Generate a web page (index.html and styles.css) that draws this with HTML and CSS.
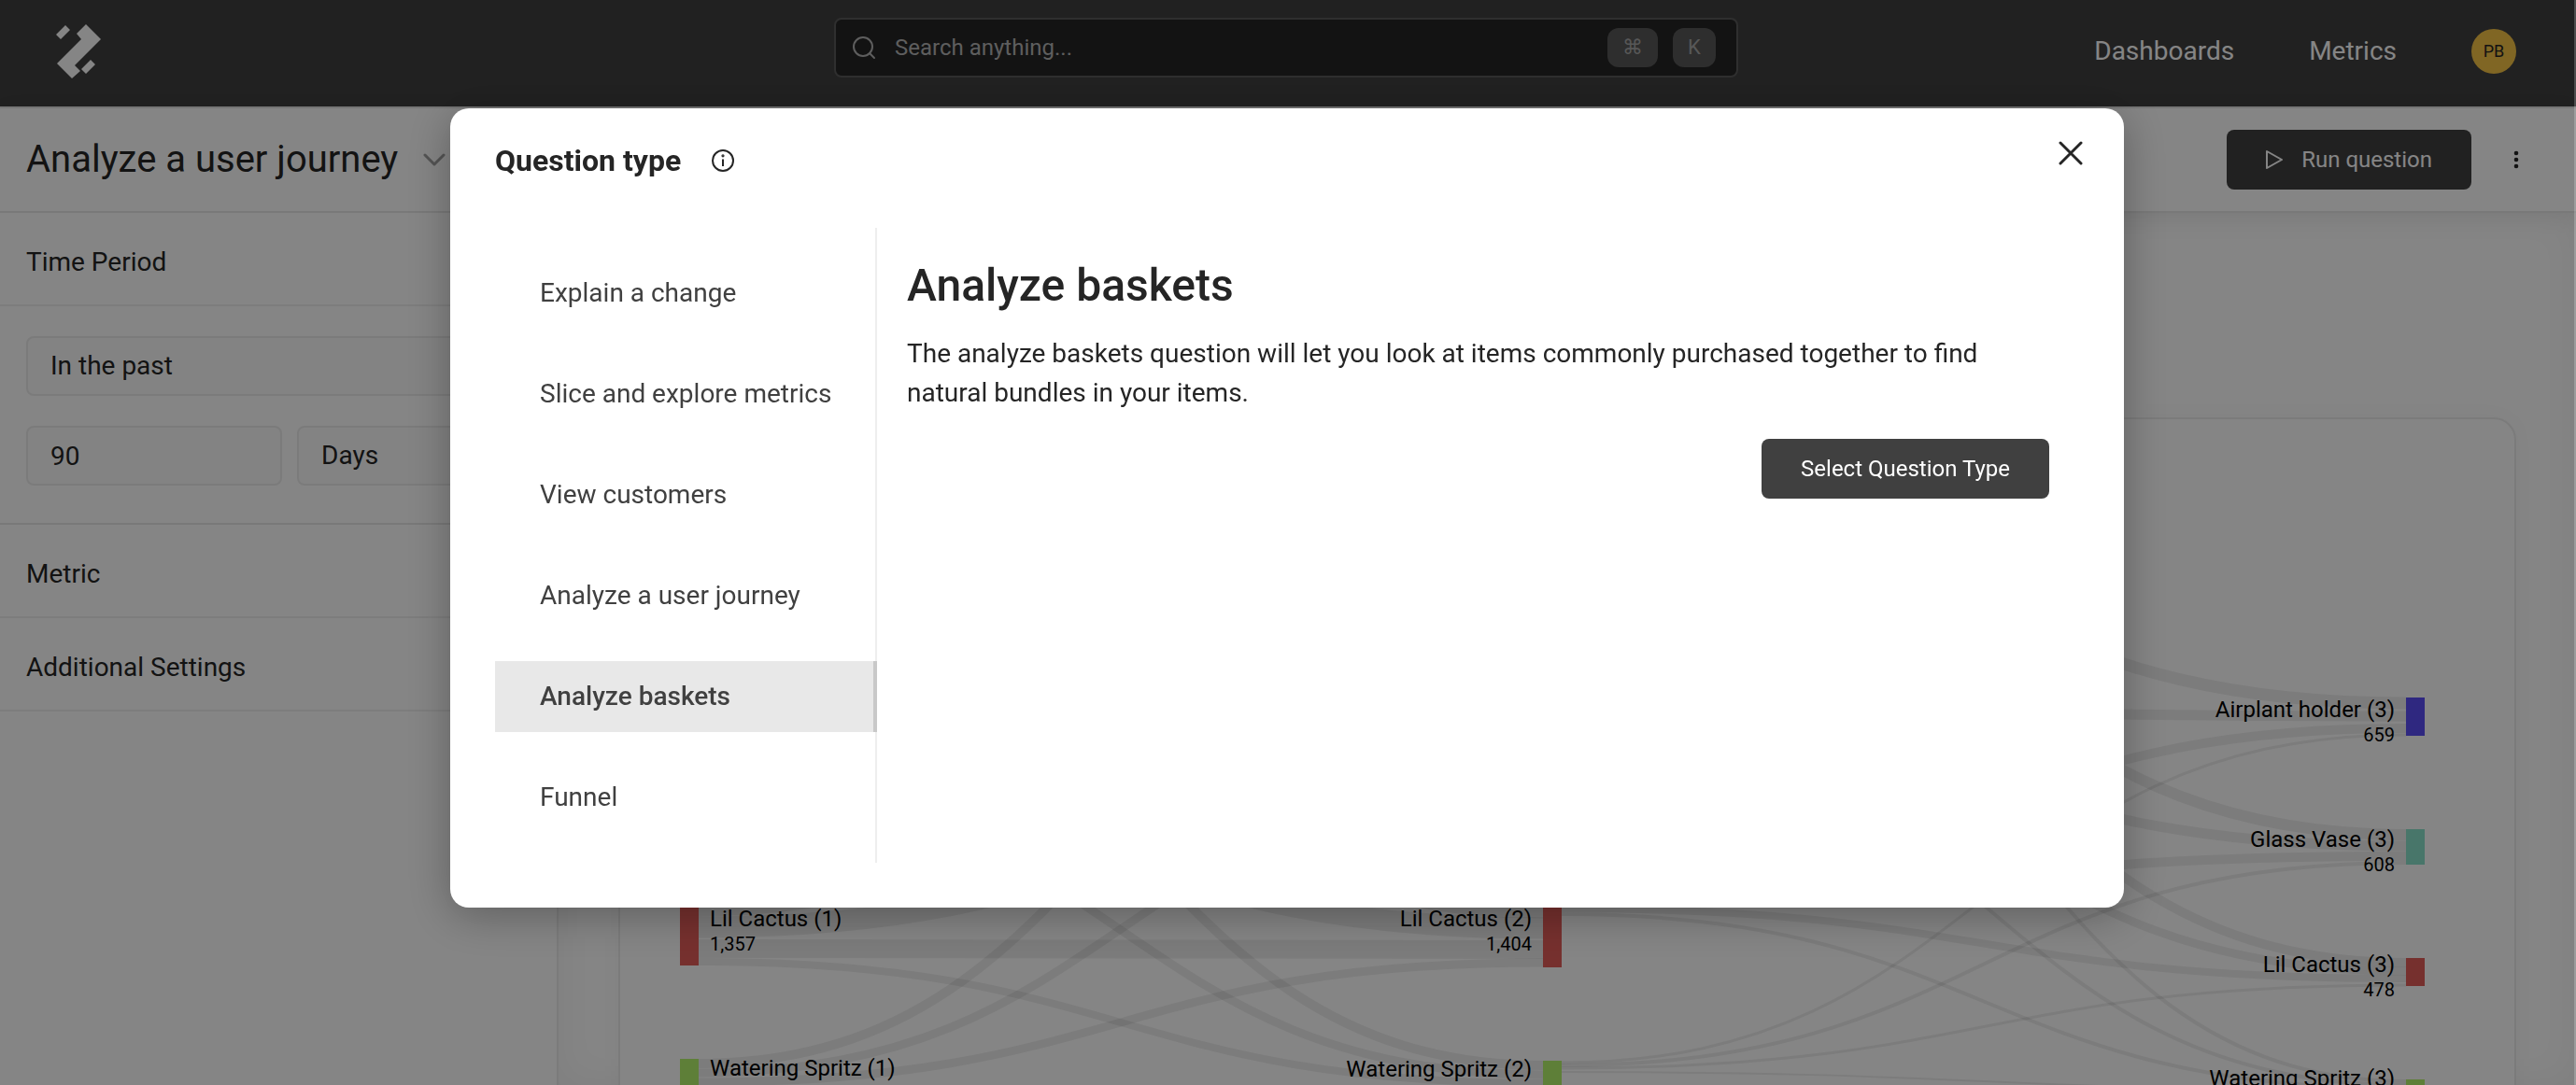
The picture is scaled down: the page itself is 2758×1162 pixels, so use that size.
FILE: index.html
```html
<!DOCTYPE html>
<html lang="en">
<head>
<meta charset="utf-8">
<title>Analyze a user journey</title>
<link rel="stylesheet" href="styles.css">
</head>
<body>
<div class="app">
  <header class="topbar">
    <a class="logo" href="#" aria-label="Home">
      <svg width="48" height="60" viewBox="0 0 48 60" fill="currentColor"><path d="M10 1 15 6 5 16 0 11ZM32 0 48 16 20 44 26 50 17 58 1 42 27 16 22 10ZM37 38 42 43 32 53 27 48Z"/></svg>
    </a>
    <form class="search" role="search">
      <svg class="search-icon" width="26" height="26" viewBox="0 0 26 26" fill="none" stroke="currentColor" stroke-width="2" stroke-linecap="round"><circle cx="12" cy="12" r="10"/><path d="m19 19 5 5"/></svg>
      <input class="search-input" type="text" aria-label="Search" placeholder="Search anything...">
      <kbd class="key key-wide">⌘</kbd>
      <kbd class="key">K</kbd>
    </form>
    <nav class="topnav">
      <a href="#">Dashboards</a>
      <a href="#">Metrics</a>
      <button class="avatar" type="button">PB</button>
    </nav>
  </header>

  <div class="subbar">
    <h1 class="page-title">Analyze a user journey</h1>
    <svg class="chevron" width="24" height="14" viewBox="0 0 24 14" fill="none" stroke="currentColor" stroke-width="3" stroke-linecap="round" stroke-linejoin="round"><path d="M2 2 12 12 22 2"/></svg>
    <button class="btn btn-run" type="button">
      <svg width="18" height="22" viewBox="0 0 18 22" fill="none" stroke="currentColor" stroke-width="2" stroke-linejoin="round"><path d="M1 2 17 11 1 20Z"/></svg>
      Run question
    </button>
    <button class="more" type="button" aria-label="More options">
      <svg width="6" height="20" viewBox="0 0 6 20" fill="currentColor"><circle cx="3" cy="3" r="2.3"/><circle cx="3" cy="10" r="2.3"/><circle cx="3" cy="17" r="2.3"/></svg>
    </button>
  </div>

  <div class="workspace">
    <aside class="settings">
      <h2 class="section-title">Time Period</h2>
      <div class="section-body">
        <select class="field field-wide" aria-label="Range type"><option>In the past</option></select>
        <input class="field" type="text" aria-label="Amount" value="90">
        <select class="field" aria-label="Unit"><option>Days</option></select>
      </div>
      <h2 class="section-title">Metric</h2>
      <h2 class="section-title">Additional Settings</h2>
    </aside>
    <main class="results">
      <section class="card">
        <svg class="sankey" viewBox="664 449 2028 760">
          <g class="links">
            <path stroke-width="23" d="M748 970C1200 970 1200 636 1652 636"/>
            <path stroke-width="23" d="M748 993C1200 993 1200 845 1652 845"/>
            <path stroke-width="20" d="M748 1016C1200 1016 1200 1017 1652 1017"/>
            <path stroke-width="8" d="M748 1030C1200 1030 1200 1160 1652 1160"/>
            <path stroke-width="23" d="M748 636C1200 636 1200 972 1652 972"/>
            <path stroke-width="23" d="M748 845C1200 845 1200 994 1652 994"/>
            <path stroke-width="9" d="M748 1159C1200 1159 1200 1031 1652 1031"/>
            <path stroke-width="10" d="M748 1139C1200 1139 1200 634 1652 634"/>
            <path stroke-width="9" d="M748 1149C1200 1149 1200 841 1652 841"/>
            <path stroke-width="10" d="M748 640C1200 640 1200 1141 1652 1141"/>
            <path stroke-width="9" d="M748 841C1200 841 1200 1151 1652 1151"/>
            <path stroke-width="13" d="M1672 548C2124 548 2124 753 2576 753"/>
            <path stroke-width="11" d="M1672 758C2124 758 2124 767 2576 767"/>
            <path stroke-width="10" d="M1672 947C2124 947 2124 780 2576 780"/>
            <path stroke-width="3" d="M1672 1138C2124 1138 2124 787 2576 787"/>
            <path stroke-width="12" d="M1672 560C2124 560 2124 894 2576 894"/>
            <path stroke-width="11" d="M1672 768C2124 768 2124 906 2576 906"/>
            <path stroke-width="10" d="M1672 960C2124 960 2124 917 2576 917"/>
            <path stroke-width="4" d="M1672 1141C2124 1141 2124 924 2576 924"/>
            <path stroke-width="10" d="M1672 583C2124 583 2124 1031 2576 1031"/>
            <path stroke-width="9" d="M1672 762C2124 762 2124 1040 2576 1040"/>
            <path stroke-width="8" d="M1672 973C2124 973 2124 1048 2576 1048"/>
            <path stroke-width="3" d="M1672 1144C2124 1144 2124 1055 2576 1055"/>
            <path stroke-width="4" d="M1672 560C2124 560 2124 1158 2576 1158"/>
            <path stroke-width="4" d="M1672 777C2124 777 2124 1162 2576 1162"/>
            <path stroke-width="4" d="M1672 979C2124 979 2124 1166 2576 1166"/>
            <path stroke-width="2" d="M1672 1148C2124 1148 2124 1168 2576 1168"/>
          </g>
          <g class="red"><rect x="728" y="960" width="20" height="74"/><rect x="1652" y="960" width="20" height="76"/><rect x="2576" y="1026" width="20" height="30"/></g>
          <g class="green"><rect x="728" y="1134" width="20" height="40"/><rect x="1652" y="1136" width="20" height="40"/><rect x="2576" y="1156" width="20" height="14"/></g>
          <rect class="blue" x="2576" y="747" width="20" height="41"/>
          <rect class="teal" x="2576" y="888" width="20" height="38"/>
          <g class="node-name">
            <text x="760" y="992">Lil Cactus (1)</text>
            <text x="760" y="1152">Watering Spritz (1)</text>
            <g text-anchor="end">
              <text x="1640" y="992">Lil Cactus (2)</text>
              <text x="1640" y="1153">Watering Spritz (2)</text>
              <text x="2564" y="768">Airplant holder (3)</text>
              <text x="2564" y="907">Glass Vase (3)</text>
              <text x="2564" y="1041">Lil Cactus (3)</text>
              <text x="2564" y="1163">Watering Spritz (3)</text>
            </g>
          </g>
          <g class="node-value">
            <text x="760" y="1018">1,357</text>
            <g text-anchor="end">
              <text x="1640" y="1018">1,404</text>
              <text x="2564" y="794">659</text>
              <text x="2564" y="933">608</text>
              <text x="2564" y="1067">478</text>
            </g>
          </g>
        </svg>
      </section>
    </main>
  </div>
</div>

<div class="overlay">
  <div class="modal" role="dialog" aria-modal="true" aria-labelledby="modal-title">
    <div class="modal-head">
      <h2 class="modal-title" id="modal-title">Question type</h2>
      <svg class="info" width="26" height="26" viewBox="0 0 26 26" fill="none" stroke="currentColor" stroke-width="2"><circle cx="13" cy="13" r="11"/><path d="M13 11.500V19"/><circle cx="13" cy="7.800" r=".6"/></svg>
      <button class="close" type="button" aria-label="Close">
        <svg width="26" height="26" viewBox="0 0 26 26" fill="none" stroke="currentColor" stroke-width="3" stroke-linecap="round"><path d="M2 2 24 24M24 2 2 24"/></svg>
      </button>
    </div>
    <div class="modal-body">
      <nav class="types">
        <a href="#">Explain a change</a>
        <a href="#">Slice and explore metrics</a>
        <a href="#">View customers</a>
        <a href="#">Analyze a user journey</a>
        <a class="selected" href="#" aria-current="true">Analyze baskets</a>
        <a href="#">Funnel</a>
      </nav>
      <section class="detail">
        <h3 class="detail-title">Analyze baskets</h3>
        <p class="detail-text">The analyze baskets question will let you look at items commonly purchased together to find natural bundles in your items.</p>
        <button class="btn" type="button">Select Question Type</button>
      </section>
    </div>
  </div>
</div>
</body>
</html>
```
FILE: styles.css
```css
* { box-sizing: border-box; }
body { margin: 0; background: #fff; color: #252525; font: 28px/40px Roboto, "Liberation Sans", sans-serif; }
h1, h2, h3, p { margin: 0; font-weight: 400; }
a { color: inherit; text-decoration: none; }
button, input, select { font: inherit; color: inherit; margin: 0; border: 0; background: none; padding: 0; }
svg { display: block; flex: none; }

.app { height: 100vh; overflow: hidden; display: flex; flex-direction: column; }

.topbar { flex: none; display: grid; grid-template-columns: 1fr minmax(0, 968px) 1fr; height: 116px; padding: 0 64px 0 60px; background: #404040; border-bottom: 2px solid #e8e8e8; color: #fff; }
.logo { align-self: start; justify-self: start; margin-top: 26px; }
.search { display: flex; align-items: center; height: 64px; margin: 19px 0 0; padding: 0 22px 0 17px; background: #252525; border: 2px solid #5a5a5a; border-radius: 8px; color: #b4b4b4; }
.search-input { flex: 1; min-width: 0; margin-left: 20px; font-size: 24px; outline: 0; }
.search-input::placeholder { color: #b4b4b4; opacity: 1; }
.key { display: grid; place-items: center; width: 46px; height: 42px; margin-left: 16px; border-radius: 12px; background: #585858; color: #a8a8a8; font: 22px/24px Roboto, "DejaVu Sans", sans-serif; }
.key-wide { width: 54px; }
.topnav { display: flex; justify-content: flex-end; align-items: center; gap: 80px; height: 110px; }
.avatar { width: 48px; height: 48px; border-radius: 50%; background: #f6c445; color: #252525; font-size: 18px; }

.subbar { position: relative; flex: none; display: flex; align-items: center; height: 112px; padding: 0 61px 0 28px; border-bottom: 2px solid #e8e8e8; background: #fff; box-shadow: 0 4px 24px rgba(0, 0, 0, .06); }
.page-title { font-size: 40px; line-height: 48px; }
.chevron { margin-left: 27px; color: #a0a0a0; }
.btn { display: inline-flex; align-items: center; justify-content: center; height: 64px; padding: 0 42px; border-radius: 8px; background: #404040; color: #fff; font-size: 24px; }
.btn-run { gap: 20px; margin-left: auto; }
.more { margin-left: 45px; }

.workspace { flex: 1; min-height: 0; display: flex; }
.settings { position: relative; width: 598px; flex: none; background: #fff; border-right: 2px solid #ececec; }
.section-title { padding: 33px 28px 25px; border-bottom: 2px solid #f0f0f0; font-size: 28px; line-height: 40px; }
.section-body { display: grid; grid-template-columns: 274px 1fr; gap: 32px 16px; padding: 32px 28px 40px; border-bottom: 2px solid #e8e8e8; }
.field { width: 100%; height: 64px; padding: 0 24px; border: 2px solid #ececec; border-radius: 8px; background: #fbfbfb; appearance: none; }
.field-wide { grid-column: 1 / -1; }
.results { flex: 1; min-width: 0; padding: 219px 64px 0; box-shadow: inset 0 0 40px rgba(0, 0, 0, .05); overflow: hidden; }
.card { border: 2px solid #ececec; border-radius: 24px; background: #fff; box-shadow: 0 0 24px rgba(0, 0, 0, .03); }
.sankey { width: 100%; height: auto; }
.links { fill: none; stroke: rgba(0, 0, 0, .07); }
.red { fill: #e35d59; }
.green { fill: #b4f46c; }
.blue { fill: #5a4df5; }
.teal { fill: #8ae2cc; }
.node-name { fill: #000; font-size: 24px; }
.node-value { fill: #000; font-size: 20px; }

.overlay { position: fixed; inset: 0; padding-top: 116px; background: rgba(0, 0, 0, .48); border-right: 2px solid rgba(255, 255, 255, .2); }
.modal { width: 94%; max-width: 1792px; margin: 0 auto; padding: 0 48px 48px; border-radius: 20px; background: #fff; box-shadow: 0 8px 48px rgba(0, 0, 0, .3); }
.modal-head { display: flex; align-items: center; height: 112px; margin-bottom: 16px; }
.modal-title { font-size: 32px; font-weight: 700; }
.info { margin-left: 32px; }
.close { margin: 0 -4px 16px auto; }
.modal-body { display: flex; }
.types { display: flex; flex-direction: column; gap: 32px; flex: none; width: 409px; padding: 32px 0; border-right: 2px solid #eee; color: #404040; }
.types a { padding: 18px 48px; margin-right: -2px; line-height: 40px; white-space: nowrap; }
.types .selected { background: #e8e8e8; border-right: 4px solid #c8c8c8; font-weight: 500; }
.detail { flex: 1; display: flex; flex-direction: column; align-items: flex-start; padding: 34px 32px 0; }
.detail-title { font-size: 48px; line-height: 56px; font-weight: 500; }
.detail-text { margin: 24px 0 28px; line-height: 42px; }
.detail .btn { align-self: flex-end; }
```
